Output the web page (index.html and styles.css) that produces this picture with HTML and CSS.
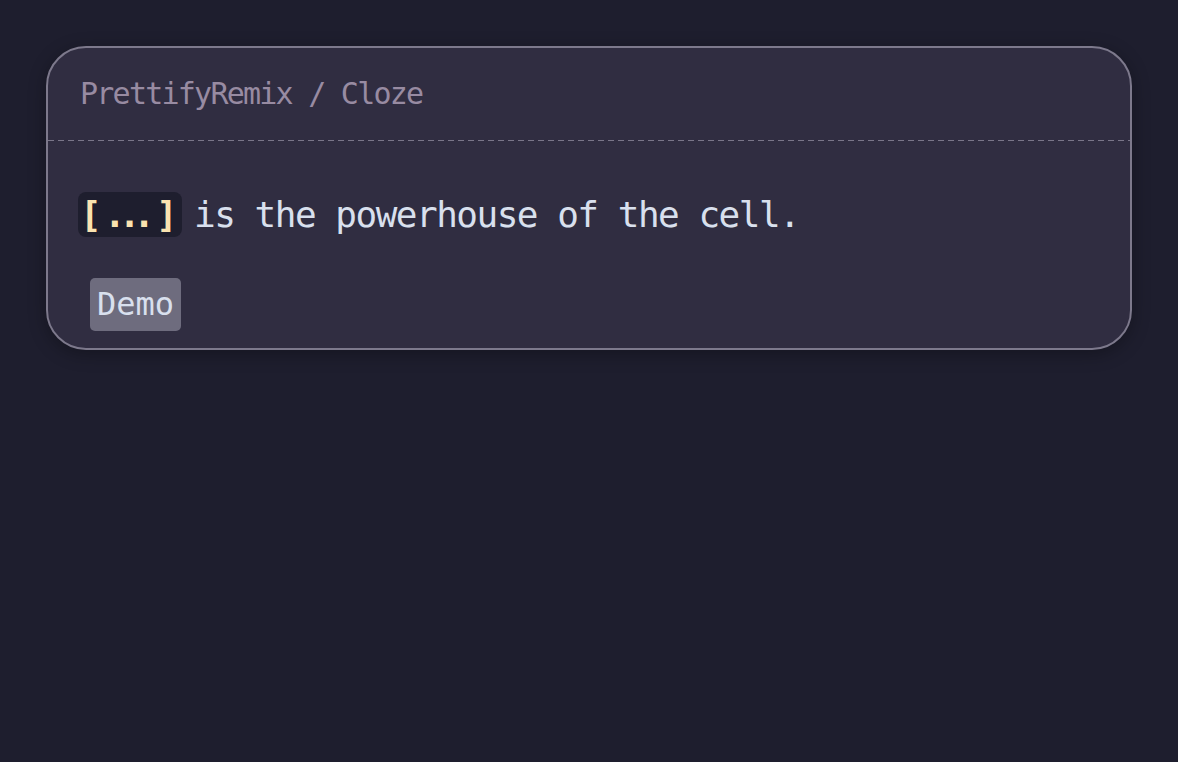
FILE: index.html
```html
<!DOCTYPE html>
<html lang="en">
<head>
<meta charset="utf-8">
<title>PrettifyRemix / Cloze</title>
<link rel="stylesheet" href="styles.css">
</head>
<body>
  <div class="card">
    <div class="card-header">PrettifyRemix / Cloze</div>
    <div class="divider"></div>
    <div class="card-body">
      <p class="question"><span class="cloze"><span>[</span><span class="dots">...</span><span>]</span></span>is the powerhouse of the cell.</p>
      <div class="tags"><span class="tag">Demo</span></div>
    </div>
  </div>
</body>
</html>
```

FILE: styles.css
```css
html, body {
  margin: 0;
  padding: 0;
  background: #1e1e2e;
}

body {
  padding: 46px;
  font-family: "DejaVu Sans Mono", "Liberation Mono", monospace;
  color: #d9e0ee;
}

.card {
  background: #302d41;
  border: 2px solid #7d798c;
  border-radius: 40px;
  box-shadow: 0 4px 18px rgba(0, 0, 0, 0.3);
  overflow: hidden;
}

.card-header {
  height: 92px;
  line-height: 92px;
  padding-left: 32px;
  font-size: 30px;
  letter-spacing: -1.76px;
  color: #988ba2;
}

.divider {
  height: 1px;
  background: repeating-linear-gradient(to right, #7a7689 0 6px, transparent 6px 10px);
}

.card-body {
  padding: 50px 30px 17px;
}

.question {
  margin: 0;
  font-size: 36px;
  line-height: 48px;
  letter-spacing: -1.5px;
  color: #d9e0ee;
}

.cloze {
  display: inline-block;
  line-height: 45px;
  padding: 0 6px 0 2px;
  margin-right: 12px;
  background: #1e1e2e;
  border-radius: 8px;
  color: #fae3b0;
  font-weight: bold;
  letter-spacing: -1.67px;
}

.dots {
  letter-spacing: -7px;
  margin: 0 8px 0 4px;
}

.tags {
  margin-top: 39px;
  padding-left: 12px;
}

.tag {
  display: inline-block;
  height: 53px;
  line-height: 53px;
  padding: 0 7px;
  background: #6e6c7e;
  border-radius: 5px;
  font-size: 32px;
  letter-spacing: 0;
  color: #d9e0ee;
}
```
